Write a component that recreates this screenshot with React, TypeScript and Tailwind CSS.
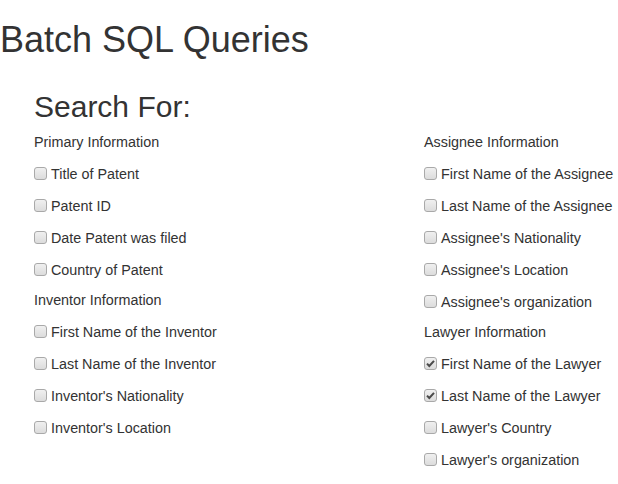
import React, { useState } from "react";

type Section = { title: string; items: string[] };

const leftSections: Section[] = [
  {
    title: "Primary Information",
    items: ["Title of Patent", "Patent ID", "Date Patent was filed", "Country of Patent"],
  },
  {
    title: "Inventor Information",
    items: [
      "First Name of the Inventor",
      "Last Name of the Inventor",
      "Inventor's Nationality",
      "Inventor's Location",
    ],
  },
];

const rightSections: Section[] = [
  {
    title: "Assignee Information",
    items: [
      "First Name of the Assignee",
      "Last Name of the Assignee",
      "Assignee's Nationality",
      "Assignee's Location",
      "Assignee's organization",
    ],
  },
  {
    title: "Lawyer Information",
    items: [
      "First Name of the Lawyer",
      "Last Name of the Lawyer",
      "Lawyer's Country",
      "Lawyer's organization",
    ],
  },
];

const Checkbox = ({ label, checked, onToggle }: { label: string; checked: boolean; onToggle: () => void }) => (
  <label className="mt-3 flex h-5 cursor-pointer items-center gap-[4px] leading-5">
    <span className="relative flex h-[13px] w-[13px] shrink-0">
      <input
        type="checkbox"
        checked={checked}
        onChange={onToggle}
        className="h-[13px] w-[13px] cursor-pointer appearance-none rounded-[3px] border border-[#a9a9a9] bg-gradient-to-b from-[#f0f0f0] to-[#dcdcdc]"
      />
      {checked && (
        <svg
          viewBox="0 0 13 13"
          className="pointer-events-none absolute inset-0 h-[13px] w-[13px]"
        >
          <path d="M3 6.6 L5.3 9 L10 3.8" fill="none" stroke="#4a4a4a" strokeWidth="2" />
        </svg>
      )}
    </span>
    <span>{label}</span>
  </label>
);

const App: React.FC = () => {
  const [checked, setChecked] = useState<Record<string, boolean>>({
    "First Name of the Lawyer": true,
    "Last Name of the Lawyer": true,
  });

  const toggle = (key: string) => setChecked((c) => ({ ...c, [key]: !c[key] }));

  const renderColumn = (sections: Section[]) => (
    <div className="flex flex-col">
      {sections.map((section, i) => (
        <div key={section.title} className={i > 0 ? "mt-[10px]" : ""}>
          <div className="h-5 leading-5">{section.title}</div>
          {section.items.map((item) => (
            <Checkbox
              key={item}
              label={item}
              checked={!!checked[item]}
              onToggle={() => toggle(item)}
            />
          ))}
        </div>
      ))}
    </div>
  );

  return (
    <div className="min-h-screen bg-white text-[#333] [font-family:'Liberation_Sans',Arial,sans-serif]">
      <h1 className="mt-[20px] text-[36px] leading-[1.1]">Batch SQL Queries</h1>
      <div className="pl-[34px]">
        <h2 className="mt-[30px] mb-[9px] text-[30px] leading-[1.1]">Search For:</h2>
        <div className="grid grid-cols-[390px_1fr] text-[14.35px]">
          {renderColumn(leftSections)}
          {renderColumn(rightSections)}
        </div>
      </div>
    </div>
  );
};

export default App;
